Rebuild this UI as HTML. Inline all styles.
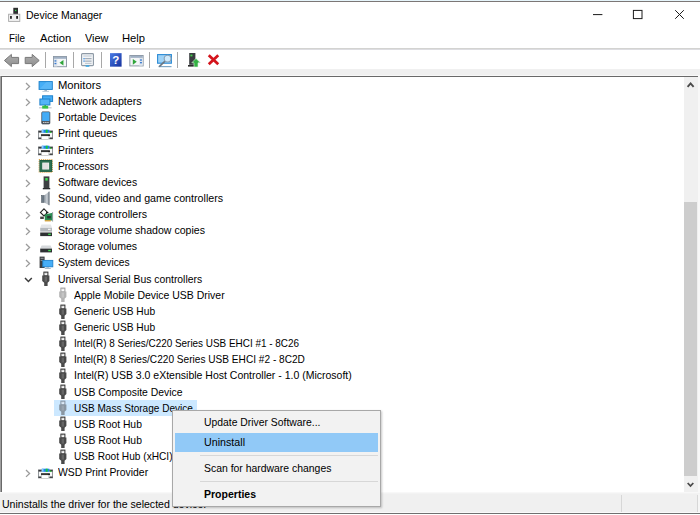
<!DOCTYPE html>
<html><head><meta charset="utf-8"><title>Device Manager</title>
<style>
html,body{margin:0;padding:0;}
body{width:700px;height:515px;overflow:hidden;position:relative;background:#fff;font-family:"Liberation Sans",sans-serif;font-size:11.5px;color:#000;}
.a{position:absolute;}
.t{position:absolute;white-space:nowrap;height:16px;line-height:16px;transform-origin:0 50%;}
svg{position:absolute;overflow:visible;}
</style></head><body>

<div class="a" style="left:0;top:0;width:700px;height:1px;background:#e6f5fb"></div>
<div class="a" style="left:0;top:1px;width:700px;height:1px;background:#7c7776"></div>
<div class="a" style="left:0;top:48px;width:700px;height:1px;background:#d3d3d1"></div>
<div class="a" style="left:0;top:49px;width:700px;height:1px;background:#dddde1"></div>
<div class="a" style="left:0;top:69px;width:700px;height:7px;background:#f0f0f0"></div>
<div class="a" style="left:0;top:75px;width:700px;height:1px;background:#f8f8f8"></div>
<div class="a" style="left:0;top:76px;width:1px;height:416px;background:#a0a0a0"></div>
<div class="a" style="left:1px;top:76px;width:698px;height:416px;background:#fff;border-top:1px solid #696969;border-left:1px solid #696969;box-sizing:border-box"></div>
<div class="a" style="left:684px;top:77px;width:14px;height:415px;background:#f0f0f0"></div>
<div class="a" style="left:698px;top:76px;width:2px;height:416px;background:#f8f8f8"></div>
<div class="a" style="left:684px;top:202px;width:13px;height:274px;background:#cdcdcd"></div>
<svg style="left:684px;top:77px" width="14" height="14" viewBox="0 0 14 14"><path d="M3.6 9.8 L6.6 6.4 L9.6 9.8" fill="none" stroke="#4a4a4a" stroke-width="1.9"/></svg>
<svg style="left:684px;top:478px" width="14" height="14" viewBox="0 0 14 14"><path d="M3.7 5 L6.5 8 L9.3 5" fill="none" stroke="#4a4a4a" stroke-width="1.8"/></svg>
<div class="a" style="left:0;top:492px;width:700px;height:21px;background:#f0f0f0"></div>
<div class="a" style="left:0;top:492px;width:700px;height:1px;background:#f8f8f8"></div>
<div class="a" style="left:0;top:493px;width:700px;height:1px;background:#f3f3f3"></div>
<div class="a" style="left:621px;top:495px;width:1px;height:17px;background:#d7d7d7"></div>
<div class="a" style="left:697px;top:495px;width:1px;height:17px;background:#d7d7d7"></div>
<div class="a" style="left:698px;top:494px;width:2px;height:18px;background:#f6f6f6"></div>
<div class="a" style="left:0;top:512px;width:700px;height:1px;background:#fafafa"></div>
<div class="a" style="left:0;top:513px;width:700px;height:1px;background:#707070"></div>
<div class="a" style="left:0;top:514px;width:700px;height:1px;background:#fff"></div>
<svg style="left:590px;top:6px" width="100" height="18" viewBox="0 0 100 18"><g fill="none" stroke="#1a1a1a" stroke-width="1"><path d="M3 8.6 H12.4"/><rect x="43.4" y="4.4" width="8.6" height="8.2"/><path d="M85.2 4.2 L93.8 12.8 M93.8 4.2 L85.2 12.8"/></g></svg>
<svg style="left:8px;top:7px" width="14" height="16" viewBox="0 0 14 16"><rect x="5.3" y="0.8" width="4.7" height="6.4" fill="#2e2e30"/><rect x="7" y="2.8" width="1.3" height="1.3" fill="#2fe04a"/><rect x="0.6" y="7.2" width="11.2" height="7.2" fill="#f2f2f2" stroke="#a8a8a8" stroke-width="0.9"/><rect x="2.1" y="9" width="1.7" height="2.8" fill="#1e1e1e"/><rect x="8.2" y="9" width="1.8" height="2.8" fill="#1e1e1e"/></svg>
<svg style="left:3px;top:52px" width="38" height="16" viewBox="0 0 38 16"><defs><linearGradient id="ag" x1="0" y1="0" x2="0" y2="1"><stop offset="0" stop-color="#aeaeae"/><stop offset="1" stop-color="#8e8e8e"/></linearGradient></defs><path d="M1.4 8.5 L8.4 2.4 L8.4 5.4 L15.6 5.4 L15.6 11.6 L8.4 11.6 L8.4 14.6 Z" fill="url(#ag)" stroke="#787878" stroke-width="1" stroke-linejoin="round"/><path d="M36.2 8.5 L29.2 2.4 L29.2 5.4 L22.2 5.4 L22.2 11.6 L29.2 11.6 L29.2 14.6 Z" fill="url(#ag)" stroke="#787878" stroke-width="1" stroke-linejoin="round"/></svg><div class="a" style="left:45.0px;top:52px;width:1px;height:16px;background:#a8a8a8"></div><div class="a" style="left:73.0px;top:52px;width:1px;height:16px;background:#a8a8a8"></div><div class="a" style="left:101.0px;top:52px;width:1px;height:16px;background:#a8a8a8"></div><div class="a" style="left:149.0px;top:52px;width:1px;height:16px;background:#a8a8a8"></div><div class="a" style="left:177.3px;top:52px;width:1px;height:16px;background:#a8a8a8"></div><svg style="left:53px;top:55.5px" width="14" height="11.2" viewBox="0 0 15 12"><rect x="0.5" y="0.5" width="14" height="11" fill="#f4f6f8" stroke="#8a96a4"/><rect x="1" y="1" width="13" height="2" fill="#9fb0c4"/><rect x="1" y="3.2" width="3.6" height="8" fill="#dfe6ee"/><rect x="1.6" y="4.6" width="2" height="1.4" fill="#3a7bd0"/><rect x="1.6" y="7.4" width="2" height="1.4" fill="#3a7bd0"/><path d="M11.2 4.2 L11.2 10.2 L7 7.2 Z" fill="#2fa53a"/></svg><svg style="left:81px;top:53px" width="13" height="14" viewBox="0 0 14 15"><rect x="0.6" y="0.6" width="12.8" height="13" rx="1" fill="#f2f4f6" stroke="#8e9aa6" stroke-width="1.2"/><rect x="2.5" y="2.5" width="9" height="1.4" fill="#c9d3dd"/><rect x="4.4" y="5.6" width="7" height="1" fill="#8c98a6"/><rect x="2.6" y="5.4" width="1.4" height="1.4" fill="#3b8be0"/><rect x="4.4" y="8.2" width="7" height="1" fill="#8c98a6"/><rect x="2.6" y="8" width="1.4" height="1.4" fill="#3b8be0"/><rect x="4.4" y="10.6" width="7" height="1" fill="#b4bec8"/><rect x="5" y="13.2" width="4" height="1.6" fill="#35a7e8"/></svg><svg style="left:109.6px;top:53.1px" width="11.6" height="13.8" viewBox="0 0 12 14"><defs><linearGradient id="hg" x1="0" y1="0" x2="1" y2="1"><stop offset="0" stop-color="#4a7be6"/><stop offset="1" stop-color="#16319c"/></linearGradient></defs><rect x="0" y="0" width="12" height="14" fill="url(#hg)"/><text x="6" y="11.4" text-anchor="middle" font-family="Liberation Sans, sans-serif" font-weight="bold" font-size="12" fill="#fff">?</text></svg><svg style="left:129.2px;top:55.4px" width="15" height="11.4" viewBox="0 0 15 12"><rect x="0.5" y="0.5" width="14" height="11" fill="#f4f6f8" stroke="#8a96a4"/><rect x="1" y="1" width="13" height="2" fill="#9fb0c4"/><rect x="10.4" y="3.2" width="3.6" height="8" fill="#dfe6ee"/><rect x="11.2" y="4.6" width="2" height="1.4" fill="#3a7bd0"/><rect x="11.2" y="7.4" width="2" height="1.4" fill="#3a7bd0"/><path d="M3.6 4.2 L3.6 10.2 L7.8 7.2 Z" fill="#2fa53a"/></svg><svg style="left:157px;top:53.5px" width="16" height="14" viewBox="0 0 16 14"><rect x="0.6" y="0.6" width="13.8" height="8.6" fill="#9fd3f7" stroke="#2a8ad6" stroke-width="1.1"/><rect x="1.5" y="12" width="13" height="1.2" fill="#7fa8c8"/><path d="M8.6 6.6 L2.2 12.6" stroke="#6b7680" stroke-width="1.5"/><circle cx="10.6" cy="4.6" r="3.4" fill="#cfeafc" stroke="#8aa0b4" stroke-width="1.1"/></svg><svg style="left:188px;top:53px" width="13" height="15" viewBox="0 0 13 15"><rect x="1.2" y="0" width="6.2" height="11.8" fill="#3a3d40"/><rect x="2.4" y="1.6" width="2" height="1.8" fill="#3fd24a"/><rect x="0" y="12" width="9" height="1.6" fill="#2a2a2a"/><path d="M8 5.4 L12.4 9.8 L10 9.8 L10 14 L6 14 L6 9.8 L3.8 9.8 Z" fill="#34b244" stroke="#dff5e0" stroke-width="0.6"/></svg><svg style="left:206.7px;top:54.4px" width="13" height="11.6" viewBox="0 0 12 11"><path d="M1.5 1.2 L10.5 9.8 M10.5 1.2 L1.5 9.8" stroke="#d4141c" stroke-width="2.6" stroke-linecap="butt"/></svg>
<div class="a" style="left:54px;top:400px;width:143px;height:15.6px;background:#cce8ff"></div>
<svg style="left:25px;top:81.90px" width="6" height="9" viewBox="0 0 6 9"><path d="M1 1 L4.6 4.45 L1 7.9" fill="none" stroke="#9b9b9b" stroke-width="1.3"/></svg>
<svg style="left:37.7px;top:77.5px" width="16" height="16" viewBox="0 0 16 16"><rect x="1.1" y="3.6" width="13.2" height="7.8" fill="#46aef7" stroke="#1f82cc" stroke-width="1"/><path d="M1.6 10.9 L8.4 4.1 H13.8 V10.9 Z" fill="#6cc0fa" opacity="0.55"/><rect x="6.4" y="11.9" width="2.6" height="1.1" fill="#9fb4c6"/><rect x="4.4" y="12.9" width="6.6" height="0.9" fill="#b9c6d2"/></svg>
<span class="t" style="left:57.7px;top:76.9px;transform:scaleX(0.977);">Monitors</span>
<svg style="left:25px;top:98.04px" width="6" height="9" viewBox="0 0 6 9"><path d="M1 1 L4.6 4.45 L1 7.9" fill="none" stroke="#9b9b9b" stroke-width="1.3"/></svg>
<svg style="left:37.7px;top:93.6px" width="16" height="16" viewBox="0 0 16 16"><rect x="4.6" y="1.8" width="10" height="5.6" fill="#46aef7" stroke="#1f82cc" stroke-width="1"/><rect x="1.9" y="5" width="10" height="6" fill="#52b4f8" stroke="#1f82cc" stroke-width="1"/><rect x="1" y="13.2" width="12.6" height="1.2" fill="#c4c8cc"/><rect x="4.2" y="11.8" width="6" height="2.8" fill="#35c247"/><rect x="6.4" y="11.2" width="1.6" height="1" fill="#2aa53c"/></svg>
<span class="t" style="left:57.7px;top:93.0px;transform:scaleX(0.928);">Network adapters</span>
<svg style="left:25px;top:114.18px" width="6" height="9" viewBox="0 0 6 9"><path d="M1 1 L4.6 4.45 L1 7.9" fill="none" stroke="#9b9b9b" stroke-width="1.3"/></svg>
<svg style="left:37.7px;top:109.8px" width="16" height="16" viewBox="0 0 16 16"><rect x="3.8" y="1.9" width="8" height="12" rx="0.8" fill="#3fa5f0" stroke="#4a5560" stroke-width="0.9"/><path d="M4.4 2.5 H11.2 V10.6 H4.4 Z" fill="#44acf6"/><rect x="3.8" y="11" width="8" height="2.9" fill="#4e5358"/><rect x="5" y="11.9" width="1.5" height="1.1" fill="#c8ccd0"/><rect x="7.1" y="11.9" width="1.5" height="1.1" fill="#c8ccd0"/><rect x="9.2" y="11.9" width="1.5" height="1.1" fill="#c8ccd0"/></svg>
<span class="t" style="left:57.7px;top:109.2px;transform:scaleX(0.901);">Portable Devices</span>
<svg style="left:25px;top:130.32px" width="6" height="9" viewBox="0 0 6 9"><path d="M1 1 L4.6 4.45 L1 7.9" fill="none" stroke="#9b9b9b" stroke-width="1.3"/></svg>
<svg style="left:37.7px;top:125.9px" width="16" height="16" viewBox="0 0 16 16"><g transform="translate(-0.6 0.8)"><rect x="1.1" y="4.1" width="14.1" height="8" fill="#f6f7f8" stroke="#7c8084" stroke-width="0.8"/><rect x="1.1" y="4.1" width="3.2" height="1.7" fill="#36383a"/><rect x="12" y="4.1" width="3.2" height="1.7" fill="#36383a"/><rect x="1.1" y="10.7" width="3" height="1.4" fill="#36383a"/><rect x="12.1" y="10.7" width="3.1" height="1.4" fill="#36383a"/><rect x="4.4" y="2.9" width="7.6" height="3.1" fill="#1f84ee"/><rect x="4.4" y="2.9" width="1.7" height="3.1" fill="#8ccdfa"/><rect x="8.3" y="2.9" width="2" height="3.1" fill="#18c838"/><rect x="12.4" y="4.8" width="1.5" height="1.2" fill="#20d42e"/><rect x="3.6" y="7.5" width="8.9" height="1.9" fill="#0c0c0c"/><rect x="4.3" y="9.2" width="7" height="3.5" fill="#fff" stroke="#b4b4b4" stroke-width="0.5"/></g></svg>
<span class="t" style="left:57.7px;top:125.3px;transform:scaleX(0.919);">Print queues</span>
<svg style="left:25px;top:146.46px" width="6" height="9" viewBox="0 0 6 9"><path d="M1 1 L4.6 4.45 L1 7.9" fill="none" stroke="#9b9b9b" stroke-width="1.3"/></svg>
<svg style="left:37.7px;top:142.1px" width="16" height="16" viewBox="0 0 16 16"><g transform="translate(-0.6 0.8)"><rect x="1.1" y="4.1" width="14.1" height="8" fill="#f6f7f8" stroke="#7c8084" stroke-width="0.8"/><rect x="1.1" y="4.1" width="3.2" height="1.7" fill="#36383a"/><rect x="12" y="4.1" width="3.2" height="1.7" fill="#36383a"/><rect x="1.1" y="10.7" width="3" height="1.4" fill="#36383a"/><rect x="12.1" y="10.7" width="3.1" height="1.4" fill="#36383a"/><rect x="4.4" y="2.9" width="7.6" height="3.1" fill="#1f84ee"/><rect x="4.4" y="2.9" width="1.7" height="3.1" fill="#8ccdfa"/><rect x="8.3" y="2.9" width="2" height="3.1" fill="#18c838"/><rect x="12.4" y="4.8" width="1.5" height="1.2" fill="#20d42e"/><rect x="3.6" y="7.5" width="8.9" height="1.9" fill="#0c0c0c"/><rect x="4.3" y="9.2" width="7" height="3.5" fill="#fff" stroke="#b4b4b4" stroke-width="0.5"/></g></svg>
<span class="t" style="left:57.7px;top:141.5px;transform:scaleX(0.898);">Printers</span>
<svg style="left:25px;top:162.60px" width="6" height="9" viewBox="0 0 6 9"><path d="M1 1 L4.6 4.45 L1 7.9" fill="none" stroke="#9b9b9b" stroke-width="1.3"/></svg>
<svg style="left:37.7px;top:158.2px" width="16" height="16" viewBox="0 0 16 16"><g transform="translate(-0.2 0.4)"><rect x="1.3" y="1.2" width="13.2" height="12.7" fill="none" stroke="#d6962a" stroke-width="1" stroke-dasharray="1 1.05"/><rect x="1.6" y="1.6" width="12.8" height="11.9" fill="#19563c"/><rect x="2.3" y="2.3" width="11.4" height="10.5" fill="#2c6f50"/><rect x="4.5" y="4.2" width="6.8" height="6.9" fill="#fafafa"/><rect x="5" y="4.7" width="5.8" height="5.9" fill="#e2e2e2"/></g></svg>
<span class="t" style="left:57.7px;top:157.6px;transform:scaleX(0.880);">Processors</span>
<svg style="left:25px;top:178.74px" width="6" height="9" viewBox="0 0 6 9"><path d="M1 1 L4.6 4.45 L1 7.9" fill="none" stroke="#9b9b9b" stroke-width="1.3"/></svg>
<svg style="left:37.7px;top:174.3px" width="16" height="16" viewBox="0 0 16 16"><rect x="5.6" y="2.4" width="5.8" height="11.6" fill="#3c3f42"/><rect x="7.3" y="4" width="2.4" height="2.6" fill="#3fe052"/><rect x="4.8" y="14" width="7.4" height="1.3" fill="#2a2c2e"/></svg>
<span class="t" style="left:57.7px;top:173.7px;transform:scaleX(0.903);">Software devices</span>
<svg style="left:25px;top:194.88px" width="6" height="9" viewBox="0 0 6 9"><path d="M1 1 L4.6 4.45 L1 7.9" fill="none" stroke="#9b9b9b" stroke-width="1.3"/></svg>
<svg style="left:37.7px;top:190.5px" width="16" height="16" viewBox="0 0 16 16"><defs><linearGradient id="sg" x1="0" y1="0" x2="1" y2="0"><stop offset="0" stop-color="#8c96a0"/><stop offset="0.55" stop-color="#ccd2d8"/><stop offset="1" stop-color="#7c8690"/></linearGradient></defs><rect x="3.6" y="4.6" width="2.6" height="6.8" fill="#6e7a86" stroke="#4e5862" stroke-width="0.6"/><path d="M6.2 4.4 L11.2 0.6 V14.2 L6.2 11.4 Z" fill="url(#sg)"/><rect x="10.7" y="0.6" width="0.8" height="13.6" fill="#68727c"/></svg>
<span class="t" style="left:57.7px;top:189.9px;transform:scaleX(0.929);">Sound, video and game controllers</span>
<svg style="left:25px;top:211.02px" width="6" height="9" viewBox="0 0 6 9"><path d="M1 1 L4.6 4.45 L1 7.9" fill="none" stroke="#9b9b9b" stroke-width="1.3"/></svg>
<svg style="left:37.7px;top:206.6px" width="16" height="16" viewBox="0 0 16 16"><path d="M6 1.8 L9.6 5.4 L6 9 L2.4 5.4 Z" fill="#fff" stroke="#222" stroke-width="1.1"/><path d="M8 5.4 H10.4" stroke="#222" stroke-width="1"/><rect x="2.2" y="9.6" width="3.6" height="2.4" fill="#444"/><path d="M6.8 7.6 L14.8 5.8 V13.6 H6.8 Z" fill="#2b8c52"/><rect x="9.2" y="9" width="3.6" height="2.4" fill="#2a3a34"/><rect x="14.2" y="5" width="0.9" height="9.6" fill="#9aa0a6"/><rect x="6.8" y="13.2" width="6" height="1.2" fill="#d89a2a"/></svg>
<span class="t" style="left:57.7px;top:206.0px;transform:scaleX(0.923);">Storage controllers</span>
<svg style="left:25px;top:227.16px" width="6" height="9" viewBox="0 0 6 9"><path d="M1 1 L4.6 4.45 L1 7.9" fill="none" stroke="#9b9b9b" stroke-width="1.3"/></svg>
<svg style="left:37.7px;top:222.8px" width="16" height="16" viewBox="0 0 16 16"><path d="M3.4 1.4 H12.8 L14 4.8 H2.2 Z" fill="#e4e6e8"/><rect x="2.2" y="4.8" width="11.8" height="3.8" fill="#b4b8bc"/><rect x="10" y="5.8" width="2.6" height="1.2" fill="#f2f2f2"/><rect x="2.2" y="9.5" width="11.8" height="3.6" fill="#2e3133"/><rect x="10.2" y="10.7" width="2.6" height="1.3" fill="#3fdc52"/></svg>
<span class="t" style="left:57.7px;top:222.2px;transform:scaleX(0.920);">Storage volume shadow copies</span>
<svg style="left:25px;top:243.30px" width="6" height="9" viewBox="0 0 6 9"><path d="M1 1 L4.6 4.45 L1 7.9" fill="none" stroke="#9b9b9b" stroke-width="1.3"/></svg>
<svg style="left:37.7px;top:238.9px" width="16" height="16" viewBox="0 0 16 16"><path d="M3.6 6.6 H12.6 L14 9.6 H2.2 Z" fill="#d6d9dc"/><rect x="2.2" y="9.6" width="11.8" height="3.8" fill="#2e3133"/><rect x="10.2" y="10.9" width="2.6" height="1.3" fill="#3fdc52"/></svg>
<span class="t" style="left:57.7px;top:238.3px;transform:scaleX(0.917);">Storage volumes</span>
<svg style="left:25px;top:259.44px" width="6" height="9" viewBox="0 0 6 9"><path d="M1 1 L4.6 4.45 L1 7.9" fill="none" stroke="#9b9b9b" stroke-width="1.3"/></svg>
<svg style="left:37.7px;top:255.0px" width="16" height="16" viewBox="0 0 16 16"><rect x="1.6" y="1.6" width="5" height="11.4" fill="#3c3f42"/><rect x="2.6" y="2.8" width="3" height="1" fill="#9a9ea2"/><rect x="2.6" y="5" width="3" height="1" fill="#8a8e92"/><rect x="4.8" y="5.4" width="10" height="6.4" fill="#46aef7" stroke="#1f82cc" stroke-width="0.9"/><rect x="8.4" y="12.2" width="2.6" height="0.9" fill="#9fb4c6"/><rect x="6.8" y="13" width="6" height="0.9" fill="#9fb4c6"/></svg>
<span class="t" style="left:57.7px;top:254.4px;transform:scaleX(0.889);">System devices</span>
<svg style="left:24px;top:277.2px" width="9" height="6" viewBox="0 0 9 6"><path d="M1 0.9 L4.4 4.4 L7.8 0.9" fill="none" stroke="#3c3c3c" stroke-width="1.5"/></svg>
<svg style="left:37.7px;top:271.2px" width="16" height="16" viewBox="0 0 16 16"><rect x="5.9" y="1.1" width="4" height="3.8" fill="#f4f4f4" stroke="#2e2e2e" stroke-width="1"/><rect x="7.55" y="1.4" width="0.7" height="0.9" fill="#2e2e2e"/><path d="M4.2 4.6 H11.4 V10 L9.6 11.7 V15.1 H6.2 V11.7 L4.2 10 Z" fill="#4a4a4a"/><rect x="6.6" y="5.6" width="2.4" height="5" fill="#8a8a8a" opacity="0.45"/></svg>
<span class="t" style="left:57.7px;top:270.6px;transform:scaleX(0.902);">Universal Serial Bus controllers</span>
<svg style="left:54.8px;top:287.3px" width="16" height="16" viewBox="0 0 16 16"><rect x="5.9" y="1.1" width="4" height="3.8" fill="#fafafa" stroke="#9a9a9a" stroke-width="1"/><rect x="7.55" y="1.4" width="0.7" height="0.9" fill="#9a9a9a"/><path d="M4.2 4.6 H11.4 V10 L9.6 11.7 V15.1 H6.2 V11.7 L4.2 10 Z" fill="#b4b4b4"/><rect x="6.6" y="5.6" width="2.4" height="5" fill="#d8d8d8" opacity="0.45"/></svg>
<span class="t" style="left:74.4px;top:286.7px;transform:scaleX(0.910);">Apple Mobile Device USB Driver</span>
<svg style="left:54.8px;top:303.5px" width="16" height="16" viewBox="0 0 16 16"><rect x="5.9" y="1.1" width="4" height="3.8" fill="#f4f4f4" stroke="#2e2e2e" stroke-width="1"/><rect x="7.55" y="1.4" width="0.7" height="0.9" fill="#2e2e2e"/><path d="M4.2 4.6 H11.4 V10 L9.6 11.7 V15.1 H6.2 V11.7 L4.2 10 Z" fill="#4a4a4a"/><rect x="6.6" y="5.6" width="2.4" height="5" fill="#8a8a8a" opacity="0.45"/></svg>
<span class="t" style="left:74.4px;top:302.9px;transform:scaleX(0.887);">Generic USB Hub</span>
<svg style="left:54.8px;top:319.6px" width="16" height="16" viewBox="0 0 16 16"><rect x="5.9" y="1.1" width="4" height="3.8" fill="#f4f4f4" stroke="#2e2e2e" stroke-width="1"/><rect x="7.55" y="1.4" width="0.7" height="0.9" fill="#2e2e2e"/><path d="M4.2 4.6 H11.4 V10 L9.6 11.7 V15.1 H6.2 V11.7 L4.2 10 Z" fill="#4a4a4a"/><rect x="6.6" y="5.6" width="2.4" height="5" fill="#8a8a8a" opacity="0.45"/></svg>
<span class="t" style="left:74.4px;top:319.0px;transform:scaleX(0.887);">Generic USB Hub</span>
<svg style="left:54.8px;top:335.7px" width="16" height="16" viewBox="0 0 16 16"><rect x="5.9" y="1.1" width="4" height="3.8" fill="#f4f4f4" stroke="#2e2e2e" stroke-width="1"/><rect x="7.55" y="1.4" width="0.7" height="0.9" fill="#2e2e2e"/><path d="M4.2 4.6 H11.4 V10 L9.6 11.7 V15.1 H6.2 V11.7 L4.2 10 Z" fill="#4a4a4a"/><rect x="6.6" y="5.6" width="2.4" height="5" fill="#8a8a8a" opacity="0.45"/></svg>
<span class="t" style="left:74.4px;top:335.1px;transform:scaleX(0.863);">Intel(R) 8 Series/C220 Series USB EHCI #1 - 8C26</span>
<svg style="left:54.8px;top:351.9px" width="16" height="16" viewBox="0 0 16 16"><rect x="5.9" y="1.1" width="4" height="3.8" fill="#f4f4f4" stroke="#2e2e2e" stroke-width="1"/><rect x="7.55" y="1.4" width="0.7" height="0.9" fill="#2e2e2e"/><path d="M4.2 4.6 H11.4 V10 L9.6 11.7 V15.1 H6.2 V11.7 L4.2 10 Z" fill="#4a4a4a"/><rect x="6.6" y="5.6" width="2.4" height="5" fill="#8a8a8a" opacity="0.45"/></svg>
<span class="t" style="left:74.4px;top:351.3px;transform:scaleX(0.879);">Intel(R) 8 Series/C220 Series USB EHCI #2 - 8C2D</span>
<svg style="left:54.8px;top:368.0px" width="16" height="16" viewBox="0 0 16 16"><rect x="5.9" y="1.1" width="4" height="3.8" fill="#f4f4f4" stroke="#2e2e2e" stroke-width="1"/><rect x="7.55" y="1.4" width="0.7" height="0.9" fill="#2e2e2e"/><path d="M4.2 4.6 H11.4 V10 L9.6 11.7 V15.1 H6.2 V11.7 L4.2 10 Z" fill="#4a4a4a"/><rect x="6.6" y="5.6" width="2.4" height="5" fill="#8a8a8a" opacity="0.45"/></svg>
<span class="t" style="left:74.4px;top:367.4px;transform:scaleX(0.913);">Intel(R) USB 3.0 eXtensible Host Controller - 1.0 (Microsoft)</span>
<svg style="left:54.8px;top:384.2px" width="16" height="16" viewBox="0 0 16 16"><rect x="5.9" y="1.1" width="4" height="3.8" fill="#f4f4f4" stroke="#2e2e2e" stroke-width="1"/><rect x="7.55" y="1.4" width="0.7" height="0.9" fill="#2e2e2e"/><path d="M4.2 4.6 H11.4 V10 L9.6 11.7 V15.1 H6.2 V11.7 L4.2 10 Z" fill="#4a4a4a"/><rect x="6.6" y="5.6" width="2.4" height="5" fill="#8a8a8a" opacity="0.45"/></svg>
<span class="t" style="left:74.4px;top:383.6px;transform:scaleX(0.903);">USB Composite Device</span>
<svg style="left:54.8px;top:400.3px" width="16" height="16" viewBox="0 0 16 16"><rect x="5.9" y="1.1" width="4" height="3.8" fill="#dbe9f6" stroke="#8090a0" stroke-width="1"/><rect x="7.55" y="1.4" width="0.7" height="0.9" fill="#8090a0"/><path d="M4.2 4.6 H11.4 V10 L9.6 11.7 V15.1 H6.2 V11.7 L4.2 10 Z" fill="#8996a2"/><rect x="6.6" y="5.6" width="2.4" height="5" fill="#aab6c2" opacity="0.45"/></svg>
<span class="t" style="left:74.4px;top:399.7px;transform:scaleX(0.873);">USB Mass Storage Device</span>
<svg style="left:54.8px;top:416.4px" width="16" height="16" viewBox="0 0 16 16"><rect x="5.9" y="1.1" width="4" height="3.8" fill="#f4f4f4" stroke="#2e2e2e" stroke-width="1"/><rect x="7.55" y="1.4" width="0.7" height="0.9" fill="#2e2e2e"/><path d="M4.2 4.6 H11.4 V10 L9.6 11.7 V15.1 H6.2 V11.7 L4.2 10 Z" fill="#4a4a4a"/><rect x="6.6" y="5.6" width="2.4" height="5" fill="#8a8a8a" opacity="0.45"/></svg>
<span class="t" style="left:74.4px;top:415.8px;transform:scaleX(0.900);">USB Root Hub</span>
<svg style="left:54.8px;top:432.6px" width="16" height="16" viewBox="0 0 16 16"><rect x="5.9" y="1.1" width="4" height="3.8" fill="#f4f4f4" stroke="#2e2e2e" stroke-width="1"/><rect x="7.55" y="1.4" width="0.7" height="0.9" fill="#2e2e2e"/><path d="M4.2 4.6 H11.4 V10 L9.6 11.7 V15.1 H6.2 V11.7 L4.2 10 Z" fill="#4a4a4a"/><rect x="6.6" y="5.6" width="2.4" height="5" fill="#8a8a8a" opacity="0.45"/></svg>
<span class="t" style="left:74.4px;top:432.0px;transform:scaleX(0.900);">USB Root Hub</span>
<svg style="left:54.8px;top:448.7px" width="16" height="16" viewBox="0 0 16 16"><rect x="5.9" y="1.1" width="4" height="3.8" fill="#f4f4f4" stroke="#2e2e2e" stroke-width="1"/><rect x="7.55" y="1.4" width="0.7" height="0.9" fill="#2e2e2e"/><path d="M4.2 4.6 H11.4 V10 L9.6 11.7 V15.1 H6.2 V11.7 L4.2 10 Z" fill="#4a4a4a"/><rect x="6.6" y="5.6" width="2.4" height="5" fill="#8a8a8a" opacity="0.45"/></svg>
<span class="t" style="left:74.4px;top:448.1px;transform:scaleX(0.881);">USB Root Hub (xHCI)</span>
<svg style="left:25px;top:469.26px" width="6" height="9" viewBox="0 0 6 9"><path d="M1 1 L4.6 4.45 L1 7.9" fill="none" stroke="#9b9b9b" stroke-width="1.3"/></svg>
<svg style="left:37.7px;top:464.9px" width="16" height="16" viewBox="0 0 16 16"><g transform="translate(-0.6 0.8)"><rect x="1.1" y="4.1" width="14.1" height="8" fill="#f6f7f8" stroke="#7c8084" stroke-width="0.8"/><rect x="1.1" y="4.1" width="3.2" height="1.7" fill="#36383a"/><rect x="12" y="4.1" width="3.2" height="1.7" fill="#36383a"/><rect x="1.1" y="10.7" width="3" height="1.4" fill="#36383a"/><rect x="12.1" y="10.7" width="3.1" height="1.4" fill="#36383a"/><rect x="4.4" y="2.9" width="7.6" height="3.1" fill="#1f84ee"/><rect x="4.4" y="2.9" width="1.7" height="3.1" fill="#8ccdfa"/><rect x="8.3" y="2.9" width="2" height="3.1" fill="#18c838"/><rect x="12.4" y="4.8" width="1.5" height="1.2" fill="#20d42e"/><rect x="3.6" y="7.5" width="8.9" height="1.9" fill="#0c0c0c"/><rect x="4.3" y="9.2" width="7" height="3.5" fill="#fff" stroke="#b4b4b4" stroke-width="0.5"/></g></svg>
<span class="t" style="left:57.7px;top:464.3px;transform:scaleX(0.904);">WSD Print Provider</span>
<span class="t" style="left:26.2px;top:6.6px;transform:scaleX(0.911);">Device Manager</span>
<span class="t" style="left:9.3px;top:30.2px;transform:scaleX(0.863);">File</span>
<span class="t" style="left:39.5px;top:30.2px;transform:scaleX(0.976);">Action</span>
<span class="t" style="left:84.9px;top:30.2px;transform:scaleX(0.947);">View</span>
<span class="t" style="left:122.2px;top:30.2px;transform:scaleX(0.976);">Help</span>
<span class="t" style="left:2.1px;top:495.9px;transform:scaleX(0.918);">Uninstalls the driver for the selected device.</span>
<div class="a" style="left:172px;top:410px;width:209px;height:97px;background:#f2f2f2;border:1px solid #a8a8a8;box-sizing:border-box;box-shadow:1px 1px 2px rgba(0,0,0,0.22)"></div>
<div class="a" style="left:175px;top:432.6px;width:203px;height:19px;background:#91c9f7"></div>
<div class="a" style="left:200px;top:455px;width:178px;height:1px;background:#d7d7d7"></div>
<div class="a" style="left:200px;top:481px;width:178px;height:1px;background:#d7d7d7"></div>
<span class="t" style="left:204.3px;top:414.1px;transform:scaleX(0.902);">Update Driver Software...</span>
<span class="t" style="left:204.3px;top:433.6px;transform:scaleX(0.930);">Uninstall</span>
<span class="t" style="left:204.3px;top:459.8px;transform:scaleX(0.906);">Scan for hardware changes</span>
<span class="t" style="left:204.3px;top:485.6px;transform:scaleX(0.914);font-weight:bold;">Properties</span>

</body></html>
